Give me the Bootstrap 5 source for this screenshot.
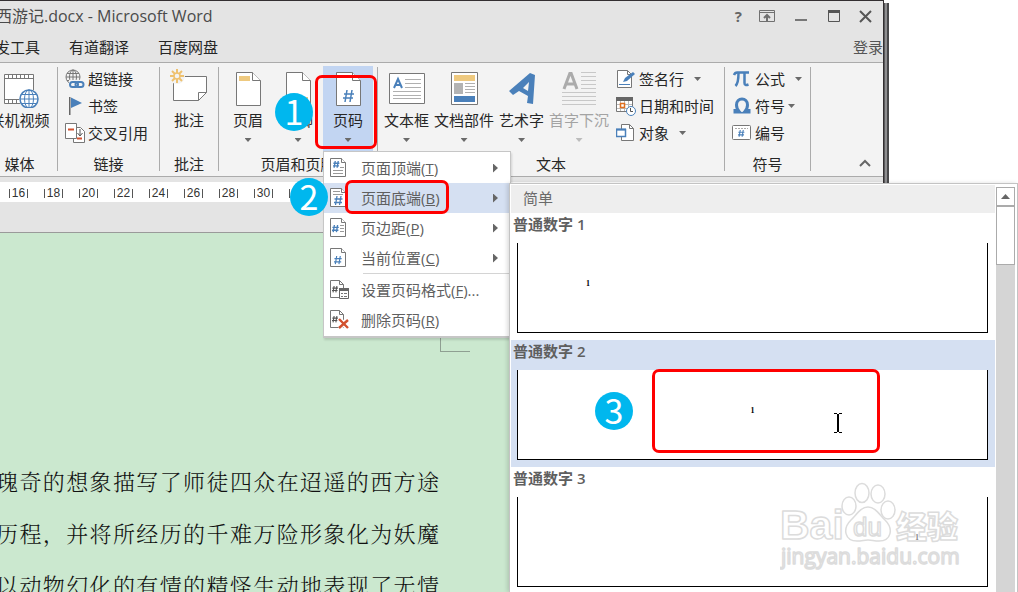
<!DOCTYPE html>
<html lang="zh-CN">
<head>
<meta charset="utf-8">
<meta name="viewport" content="width=device-width, initial-scale=1">
<title>西游记.docx - Microsoft Word</title>
<link href="https://cdn.jsdelivr.net/npm/bootstrap@5.3.0/dist/css/bootstrap.min.css" rel="stylesheet">
<style>
  body { font-family: "Open Sans", "Noto Sans CJK SC", sans-serif; font-size: 15px; line-height: 20px; color: #262626; background: #fff; min-height: 100vh; overflow: hidden; position: relative; }
  button { font: inherit; color: inherit; background: none; border: 0; padding: 0; }
  svg { display: block; flex: none; }

  /* application window */
  .word-window { margin-right: 134px; min-height: 100vh; background: #e4e4e4; border-top: 1px solid #332f31; border-right: 1px solid #332f31; box-shadow: 1px 3px 0 #59595b, 3px 3px 0 #8e8e90, 5px 3px 0 #48484a; }
  .title-bar { height: 30px; color: #4a4a4a; padding-right: 11px; }
  .title-bar h1 { font-size: 16px; line-height: 20px; font-weight: 400; margin: 0 0 0 -4px; }
  .window-controls { gap: 17px; color: #666; }
  .tab-row { height: 31px; margin-left: -20px; }
  .tab-row a { color: #262626; text-decoration: none; line-height: 20px; }
  .tab-list { gap: 29px; }
  .tab-row .sign-in { color: #555; }

  /* ribbon */
  .ribbon { background: #f3f3f3; border-top: 1px solid #ababab; border-bottom: 1px solid #ababab; padding: 4px 0 5px; }
  .rb-group { border-right: 1px solid #ababab; }
  .rb-body { height: 90px; }
  .rb-label { line-height: 14px; text-align: center; white-space: nowrap; }
  .g-media { width: 76px; margin-left: -18px; }
  .g-links { width: 102px; }
  .g-note { width: 59px; }
  .g-header { width: 159px; }
  .g-text { width: 347px; }
  .g-symbol { width: 86px; }
  .big-btn { display: flex; flex-direction: column; align-items: center; height: 90px; padding-top: 5px; white-space: nowrap; }
  .big-btn svg.art { height: 36px; margin-bottom: 2px; }
  .big-btn .caret { margin-top: 8px; }
  .slot { width: 50px; position: relative; }
  .slot .big-btn { width: 100%; }
  .slot.open::before { content: ""; position: absolute; inset: -1px 0 0; background: #c2d5f2; }
  .slot .big-btn { position: relative; }
  .faded { color: #a3a3a3; }
  .text-buttons { gap: 5px; padding-left: 6px; }
  .small-col { padding-top: 2px; gap: 7px; padding-left: 7px; }
  .small-btn { display: flex; align-items: center; gap: 3px; white-space: nowrap; }
  .small-btn .caret { margin-left: 7px; }
  .caret { width: 7px; height: 4px; background: #6a6a6a; clip-path: polygon(0 0, 100% 0, 50% 100%); flex: none; }
  .faded .caret { background: #bcbcbc; }

  /* ruler and page */
  .ruler-area { height: 56px; padding-top: 5px; border-bottom: 1px solid #9a9a9a; }
  .ruler { height: 20px; background: #fff; font: 12px/20px "Liberation Sans", sans-serif; color: #333; overflow: hidden; }
  .ruler ol { list-style: none; margin: 0; padding: 0 0 0 1px; display: flex; align-items: center; height: 22px; }
  .ruler li { flex: 0 0 35px; display: flex; justify-content: center; }
  .ruler span { width: 19px; height: 9px; line-height: 9px; text-align: center; border: solid #555; border-width: 0 1px; }
  .doc-page { background: #cbe8cf; height: calc(100vh - 233px); min-height: 359px; position: relative; }
  .crop-mark { position: absolute; left: 440px; top: 88px; width: 30px; height: 31px; border: solid #8f9f92; border-width: 0 0 1px 1px; }
  .story { width: 443px; margin-left: -4px; padding-top: 222px; font-family: "Noto Serif CJK SC", "Noto Sans CJK SC", serif; font-weight: 300; font-size: 22px; line-height: 52px; color: #111; }
  .story p { margin: 0; text-align: justify; text-align-last: justify; white-space: nowrap; }

  /* page number menu */
  .page-menu.dropdown-menu { left: 0; top: 84px; width: 188px; min-width: 0; padding: 1px 0; border: 1px solid #c6c6c6; border-bottom-width: 2px; border-radius: 0; font-size: 15px; color: #5f5f5f; background: #fff; z-index: 5; box-shadow: 1px 2px 2px #0002; }
  .page-menu .dropdown-item { display: flex; align-items: center; height: 30px; padding: 0 12px 0 6px; gap: 11px; color: #5f5f5f; font-size: 15px; line-height: 20px; }
  .page-menu .dropdown-item.lit { background: #d5e0f2; position: relative; }
  .page-menu hr { margin: 0 0 1px 39px; border-top: 1px solid #d4d4d4; opacity: 1; }
  .side-caret { width: 5px; height: 9px; background: #666; clip-path: polygon(0 0, 100% 50%, 0 100%); margin-left: auto; }

  /* gallery */
  .gallery { position: absolute; left: 509px; right: 0; top: 183px; bottom: 0; min-height: 409px; background: #fff; border: solid #c3c3c3; border-width: 1px 1px 0; padding: 1px 2px 0 1px; overflow: hidden; z-index: 6; color: #5f5f5f; box-shadow: -2px 0 4px #0002; }
  .gallery-head { background: #eee; font-size: 15px; font-weight: 400; line-height: 26px; margin: 0; padding: 0 0 2px 12px; color: #6a6a6a; }
  .gallery-item { display: block; width: 100%; height: 127px; text-align: left; padding: 1px 7px 7px 6px; }
  .gallery-item.lit { background: #d5e0f2; }
  .gallery-item strong { display: block; line-height: 20px; margin: 0 0 9px -4px; font-weight: 600; }
  .preview { display: block; position: relative; height: 90px; background: #fff; border: 1px solid #000; border-top: 0; padding: 35px 68px 0; font: 700 8px/12px "Liberation Serif", serif; color: #000; }
  .scroll-rail { width: 19px; margin-top: 2px; margin-left: 1px; background: #d5d5d5; }
  .scroll-rail button { display: flex; width: 100%; align-items: center; justify-content: center; border: 1px solid #ababab; background: #fff; }
  .scroll-up { height: 19px; }
  .scroll-thumb { height: 59px; }

  /* tutorial marks */
  .frame { position: absolute; border: 3px solid #f00; border-radius: 7px; z-index: 8; pointer-events: none; }
  .f1 { left: -8px; top: 8px; width: 62px; height: 74px; }
  .f2 { left: 21px; top: -3px; width: 104px; height: 34px; }
  .f3 { left: 134px; top: -1px; width: 228px; height: 84px; }
  .step { position: absolute; width: 38px; height: 38px; border-radius: 50%; background: #00b7ee; color: #fff; font: 400 34px/36px "Noto Sans CJK SC", sans-serif; text-align: center; z-index: 9; }
  .s1 { left: -48px; top: 26px; }
  .s2 { left: -34px; top: -5px; }
  .s3 { left: 77px; top: 22px; }
  .beam { position: absolute; left: 315px; top: 43px; }
  .watermark { position: absolute; right: 53px; bottom: 21px; width: 184px; height: 90px; z-index: 7; }
</style>
</head>
<body>
<svg width="0" height="0" class="position-absolute" aria-hidden="true">
  <defs>
    <g id="leaf" fill="#fff" stroke="#777"><path d="M.5.5h11l4 4v14H.5z"/><path d="M11.500.5v4h4"/></g>
    <g id="hash" fill="none"><path d="M3 0 1.500 9M7 0 5.500 9M.5 3h8M0 6.500h8"/></g>
    <g id="sheet" fill="#fff" stroke="#777"><path d="M.5.5h16l8 8v25H.5z"/><path d="M16.500.5v8h8"/></g>
  </defs>
</svg>

<main class="word-window">
  <header class="title-bar d-flex align-items-center justify-content-between">
    <h1>西游记.docx - Microsoft Word</h1>
    <div class="window-controls d-flex align-items-center">
      <button type="button" class="fw-bold" aria-label="帮助">?</button>
      <button type="button" aria-label="功能区显示选项"><svg width="17" height="13" fill="none" stroke="#707070"><path d="M.5.5h15v11H.5zM.5 2.500h15"/><path d="M8 11V5M5 8l3-3 3 3" stroke-width="2"/></svg></button>
      <button type="button" aria-label="最小化"><svg width="16" height="13"><path d="M2 9h12v2H2z" fill="#777"/></svg></button>
      <button type="button" aria-label="最大化"><svg width="16" height="13" fill="none" stroke="#555"><path d="M2.500.5h11v11h-11z"/><path d="M2 1.500h12" stroke-width="3"/></svg></button>
      <button type="button" aria-label="关闭"><svg width="13" height="13" fill="none" stroke="#555" stroke-width="2"><path d="m1 1 11 11M12 1 1 12"/></svg></button>
    </div>
  </header>

  <nav class="tab-row d-flex justify-content-between align-items-center">
    <div class="tab-list d-flex"><a href="#">开发工具</a><a href="#">有道翻译</a><a href="#">百度网盘</a></div>
    <a href="#" class="sign-in">登录</a>
  </nav>

  <section class="ribbon d-flex">
    <div class="rb-group g-media">
      <div class="rb-body d-flex justify-content-center">
        <button type="button" class="big-btn">
          <svg class="art" width="40" height="36" viewBox="-5 0 40 36" fill="none" stroke="#777"><path d="M.5 2.500h29v29H.5z" fill="#fff"/><path d="M.5 6.500h29M.5 27.500h29M4.500 2.500v4m4-4v4m4-4v4m4-4v4m4-4v4m4-4v4M4.500 27.500v4m4-4v4m4-4v4"/><circle cx="25" cy="27" r="10" fill="#f3f3f3" stroke="none"/><g stroke="#4a80ba"><circle cx="25" cy="27" r="9" fill="#fff" stroke-width="1.500"/><ellipse cx="25" cy="27" rx="4.500" ry="9"/><path d="M25 18v18M16 27h18M17.500 22.500h15M17.500 31.500h15"/></g></svg>
          <span>联机视频</span>
        </button>
      </div>
      <div class="rb-label">媒体</div>
    </div>

    <div class="rb-group g-links">
      <div class="rb-body small-col d-flex flex-column align-items-start">
        <button type="button" class="small-btn"><svg width="20" height="20" fill="none" stroke="#777"><circle cx="8" cy="8" r="7"/><ellipse cx="8" cy="8" rx="3.500" ry="7"/><path d="M8 1v14M1 8h14M2 4.500h12M2 11.500h8"/><path d="M4 15.500h16" stroke="#f3f3f3" stroke-width="9"/><g stroke="#4a80ba" stroke-width="2"><rect x="5" y="13" width="8" height="5" rx="2.500"/><rect x="10.500" y="13" width="8" height="5" rx="2.500"/></g></svg>超链接</button>
        <button type="button" class="small-btn"><svg width="20" height="20"><path d="M4 1h1.500v18H4z" fill="#666"/><path d="M6 1.500 17 7 6 12z" fill="#4a80ba"/></svg>书签</button>
        <button type="button" class="small-btn"><svg width="20" height="20" fill="#fff" stroke="#777"><path d="M8.500 4.500h7l4 4v11h-11z"/><path d="M.5.5h11v15H.5z"/><path d="M15 6v7m-2.500-3 2.500 3 2.500-3" stroke="#555" fill="none"/><path d="M3 6.500h6M12 15.500h5" stroke="#d35230" stroke-width="2"/></svg>交叉引用</button>
      </div>
      <div class="rb-label">链接</div>
    </div>

    <div class="rb-group g-note">
      <div class="rb-body d-flex justify-content-center">
        <button type="button" class="big-btn">
          <svg class="art overflow-visible" width="38" height="36" fill="none"><path d="M3.500 4.500h33v16l-8 8h-25z" fill="#fff" stroke="#777"/><path d="M28.500 28.500v-8h8" stroke="#777"/><circle cx="7" cy="4" r="8" fill="#f3f3f3"/><g stroke="#eec16f" stroke-width="2"><circle cx="7" cy="4" r="3" stroke-width="1.500"/><path d="M7-3v4M7 7v4M0 4h4M10 4h4M2-1l3 3M9 6l3 3M2 9l3-3M9 2l3-3"/></g></svg>
          <span>批注</span>
        </button>
      </div>
      <div class="rb-label">批注</div>
    </div>

    <div class="rb-group g-header">
      <div class="rb-body d-flex px-1">
        <div class="slot"><button type="button" class="big-btn"><svg class="art" width="25" height="36"><use href="#sheet"/><path d="M3 4h11v5H3z" fill="#eec97f"/></svg><span>页眉</span><span class="caret"></span></button></div>
        <div class="slot"><button type="button" class="big-btn"><svg class="art" width="25" height="36"><use href="#sheet"/><path d="M3 25h19v5H3z" fill="#eec97f"/></svg><span>页脚</span><span class="caret"></span></button></div>
        <div class="slot open dropdown">
          <button type="button" class="big-btn" aria-expanded="true"><svg class="art" width="25" height="36"><use href="#sheet"/><path d="m11 18-2 12m7-12-2 12M8 22h10M7 26h10" fill="none" stroke="#4a80ba" stroke-width="1.500"/></svg><span>页码</span><span class="caret"></span></button>
          <span class="frame f1"></span>
          <span class="step s1">1</span>
          <div class="page-menu dropdown-menu show">
            <button type="button" class="dropdown-item"><svg width="20" height="20"><use href="#leaf"/><use href="#hash" transform="translate(3 3) scale(.75)" stroke="#4a80ba" stroke-width="1.800"/><path d="M10 9.500h4M3 12.500h10M3 15.500h10" stroke="#999"/></svg><span>页面顶端(<u>T</u>)</span><span class="side-caret"></span></button>
            <button type="button" class="dropdown-item lit"><svg width="20" height="20"><use href="#leaf"/><path d="M3 3.500h7M3 6.500h10" stroke="#999"/><use href="#hash" transform="translate(4 8)" stroke="#4a80ba" stroke-width="1.300"/></svg><span>页面底端(<u>B</u>)</span><span class="side-caret"></span><span class="frame f2"></span><span class="step s2">2</span></button>
            <button type="button" class="dropdown-item"><svg width="20" height="20"><use href="#leaf"/><use href="#hash" transform="translate(2 7) scale(.8)" stroke="#4a80ba" stroke-width="1.700"/><path d="M10 7.500h4M10 10.500h4M10 13.500h4" stroke="#999"/></svg><span>页边距(<u>P</u>)</span><span class="side-caret"></span></button>
            <button type="button" class="dropdown-item"><svg width="20" height="20"><use href="#leaf"/><use href="#hash" transform="translate(4 8) scale(.9)" stroke="#4a80ba" stroke-width="1.300"/></svg><span>当前位置(<u>C</u>)</span><span class="side-caret"></span></button>
            <hr>
            <button type="button" class="dropdown-item"><svg width="20" height="20"><path d="M.5.5h9l4 4v13H.5z" fill="#fff" stroke="#777"/><path d="M9.500.5v4h4" fill="none" stroke="#777"/><use href="#hash" transform="translate(2 6) scale(.7)" stroke="#555" stroke-width="1.600"/><path d="M9.500 9.500h9v9h-9z" fill="#fff" stroke="#666"/><path d="M9 9.500h10" stroke="#666" stroke-width="3"/><path d="M11 13.500h2M14 13.500h3M11 16.500h2M14 16.500h3" stroke="#777"/></svg><span>设置页码格式(<u>F</u>)...</span></button>
            <button type="button" class="dropdown-item"><svg width="20" height="20"><path d="M.5.5h9l4 4v13H.5z" fill="#fff" stroke="#777"/><path d="M9.500.5v4h4" fill="none" stroke="#777"/><use href="#hash" transform="translate(2 6) scale(.7)" stroke="#555" stroke-width="1.600"/><path d="m9 9 9 9M18 9l-9 9" stroke="#fff" stroke-width="5"/><path d="m9 9 9 9M18 10l-9 8" stroke="#d2512f" stroke-width="2.400"/></svg><span>删除页码(<u>R</u>)</span></button>
          </div>
        </div>
      </div>
      <div class="rb-label">页眉和页脚</div>
    </div>

    <div class="rb-group g-text">
      <div class="rb-body d-flex">
        <div class="text-buttons d-flex">
          <button type="button" class="big-btn"><svg class="art" width="36" height="36"><path d="M.5 1.500h35v30H.5z" fill="#fff" stroke="#777"/><path d="m5 16 4-9 4 9M6.500 13h5" fill="none" stroke="#4a80ba" stroke-width="2"/><path d="M16 7.500h16M16 11.500h16M16 15.500h16M4 19.500h28M4 23.500h28M4 26.500h28" stroke="#b0b0b0"/></svg><span>文本框</span><span class="caret"></span></button>
          <button type="button" class="big-btn"><svg class="art" width="27" height="36"><path d="M.5.5h26v32H.5z" fill="#fff" stroke="#777"/><path d="M3 3h21v6H3z" fill="#eec97f"/><path d="M3 11h9v11H3z" fill="#b3b3b3"/><path d="M14 11.500h10M14 14.500h10M14 17.500h10M14 20.500h10" stroke="#b0b0b0"/><path d="M3 24h21v6H3z" fill="#4a80ba"/></svg><span>文档部件</span><span class="caret"></span></button>
          <button type="button" class="big-btn"><svg class="art" width="30" height="36"><path d="M2 19 23 1l5 2-2 29-6-1 1-7-9-5-6 4zM16 16l5 3 1-9z" fill="#4a80ba" fill-rule="evenodd"/></svg><span>艺术字</span><span class="caret"></span></button>
          <button type="button" class="big-btn faded"><svg class="art" width="34" height="36" fill="none"><path d="M2 17 8 1h1l6 16M4 12h9" stroke="#ababab" stroke-width="3"/><path d="M19 .5h15M19 4.500h15M19 8.500h15M19 12.500h15M19 16.500h15M0 20.500h34M0 24.500h34M0 28.500h34M0 32.500h34" stroke="#c8c8c8"/></svg><span>首字下沉</span><span class="caret"></span></button>
        </div>
        <div class="small-col d-flex flex-column align-items-start">
          <button type="button" class="small-btn"><svg width="20" height="20"><path d="M1.500 1.500h10l4 4v13h-14z" fill="#fff" stroke="#777"/><path d="M11.500 1.500v4h4" fill="none" stroke="#777"/><path d="M3 15.500h11" stroke="#4a80ba"/><path d="m7 13 2-4 8-6 2 2-8 7z" fill="#4a80ba"/></svg>签名行<span class="caret"></span></button>
          <button type="button" class="small-btn"><svg width="20" height="20"><path d="M.5 1.500h16v14H.5z" fill="#fff" stroke="#777"/><path d="M0 3h17" stroke="#666" stroke-width="4"/><path d="M1 8.500h15M1 12.500h15M4.500 5v10M8.500 5v10M12.500 5v10" stroke="#bbb"/><path d="M4.500 7.500h4v4h-4z" fill="#fff" stroke="#e07020" stroke-width="1.500"/><circle cx="15" cy="15" r="4.500" fill="#fff" stroke="#4a80ba"/><path d="M14.500 12v3.500h2.500" fill="none" stroke="#555"/></svg>日期和时间</button>
          <button type="button" class="small-btn"><svg width="20" height="20"><path d="M5.500 1.500h8l4 4v12h-12z" fill="#fff" stroke="#777"/><path d="M13.500 1.500v4h4" fill="none" stroke="#777"/><path d="M.5 6.500h9v7h-9z" fill="#fff" stroke="#4a80ba" stroke-width="1.500"/><path d="M0 6.500h10" stroke="#4a80ba" stroke-width="2"/></svg>对象<span class="caret"></span></button>
        </div>
      </div>
      <div class="rb-label">文本</div>
    </div>

    <div class="rb-group g-symbol">
      <div class="rb-body small-col d-flex flex-column align-items-start">
        <button type="button" class="small-btn"><svg width="20" height="20" fill="none" stroke="#4a80ba"><path d="M2 6q1-3 4-2.500h11" stroke-width="2.500"/><path d="M6.500 4q0 10-3 13M12.500 4v10q0 3 4 1.500" stroke-width="2.500"/></svg>公式<span class="caret"></span></button>
        <button type="button" class="small-btn"><svg width="20" height="20"><path d="M3 13v3h4.500q-3-3-3-7c0-4 2.500-6 5.500-6s5.500 2 5.500 6q0 4-3 7H17v-3" fill="none" stroke="#4a80ba" stroke-width="3"/></svg>符号<span class="caret ms-0"></span></button>
        <button type="button" class="small-btn"><svg width="20" height="20"><rect x=".5" y="2.500" width="18" height="14" rx="1" fill="#fff" stroke="#777"/><path d="M3 5.500h13" stroke="#aaa" stroke-dasharray="2 1"/><use href="#hash" transform="translate(6 7) scale(.75)" stroke="#4a80ba" stroke-width="1.500"/></svg>编号</button>
      </div>
      <div class="rb-label">符号</div>
    </div>
    <button type="button" class="ms-auto align-self-end me-2 pe-1 pb-1" aria-label="折叠功能区"><svg width="12" height="8" fill="none" stroke="#666" stroke-width="2"><path d="m1 7 5-5 5 5"/></svg></button>
  </section>

  <div class="ruler-area">
    <div class="ruler"><ol><li><span>16</span></li><li><span>18</span></li><li><span>20</span></li><li><span>22</span></li><li><span>24</span></li><li><span>26</span></li><li><span>28</span></li><li><span>30</span></li><li><span></span></li></ol></div>
  </div>

  <article class="doc-page">
    <span class="crop-mark"></span>
    <div class="story">
      <p>瑰奇的想象描写了师徒四众在迢遥的西方途</p>
      <p>历程，并将所经历的千难万险形象化为妖魔</p>
      <p>以动物幻化的有情的精怪生动地表现了无情</p>
    </div>
  </article>
</main>

<aside class="gallery">
  <div class="d-flex h-100">
    <div class="flex-grow-1">
      <h2 class="gallery-head">简单</h2>
      <button type="button" class="gallery-item"><strong>普通数字 1</strong><span class="preview">1</span></button>
      <button type="button" class="gallery-item lit"><strong>普通数字 2</strong><span class="preview text-center">1
        <span class="frame f3"></span><span class="step s3">3</span>
        <svg class="beam" width="10" height="20" fill="none" stroke="#000"><path d="M1 .5h3M6 .5h3M1 19.500h3M6 19.500h3"/><path d="M5 1v18" stroke-width="2"/></svg></span></button>
      <button type="button" class="gallery-item"><strong>普通数字 3</strong><span class="preview text-end">1</span></button>
    </div>
    <div class="scroll-rail">
      <button type="button" class="scroll-up" aria-label="向上滚动"><svg width="9" height="5"><path d="M0 5 4.500 0 9 5z" fill="#666"/></svg></button>
      <button type="button" class="scroll-thumb" aria-label="滚动条"></button>
    </div>
  </div>
  <svg class="watermark" viewBox="0 0 184 90" fill="#fff" stroke="#dcdcdc" stroke-width="1.500" stroke-linejoin="round" aria-label="Baidu 经验">
    <g fill-opacity=".5">
      <text x="0" y="58" font-family="Liberation Sans" font-weight="700" font-size="41">Bai</text>
      <ellipse cx="69" cy="25" rx="7" ry="9"/><ellipse cx="82" cy="12" rx="7" ry="9.500"/><ellipse cx="98" cy="13" rx="7" ry="9"/><ellipse cx="108" cy="29" rx="7" ry="9"/>
      <path d="M88 26c7 0 11 7 17 13 9 9 6 21-6 21-5 0-7-1-11-1s-6 1-11 1c-12 0-15-12-6-21 6-6 10-13 17-13z"/>
      <text x="73" y="55" font-family="Liberation Sans" font-weight="400" font-size="26">du</text>
      <text x="116" y="57" font-family="Noto Sans CJK SC" font-weight="900" font-size="31">经验</text>
      <text x="1" y="83" font-family="Open Sans" font-weight="400" font-size="21">jingyan.baidu.com</text>
    </g>
  </svg>
</aside>
<script src="https://cdn.jsdelivr.net/npm/bootstrap@5.3.0/dist/js/bootstrap.bundle.min.js"></script>
</body>
</html>
